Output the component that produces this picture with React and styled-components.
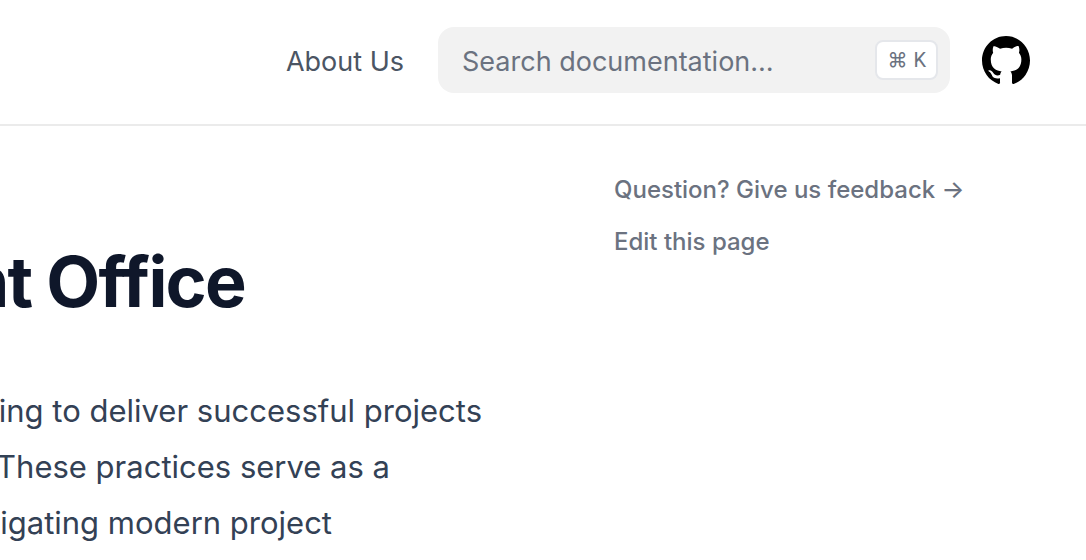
import React from 'react';
import styled, { createGlobalStyle } from 'styled-components';

const GlobalStyle = createGlobalStyle`
  *, *::before, *::after { box-sizing: border-box; }
  body {
    margin: 0;
    background: #fff;
    color: #334155;
    font-family: Inter, "Liberation Sans", sans-serif;
    overflow-x: hidden;
  }
`;

const Header = styled.header`
  display: flex;
  align-items: center;
  justify-content: flex-end;
  padding: 27px 56px 31px;
  border-bottom: 2px solid #ebebeb;
`;

const NavLink = styled.a`
  margin-right: 34px;
  padding-top: 4px;
  color: #4b5563;
  font-size: 27px;
  line-height: 40px;
  white-space: nowrap;
  text-decoration: none;
`;

const Search = styled.label`
  display: flex;
  align-items: center;
  width: 512px;
  margin-right: 32px;
  padding: 13px 12px 13px 24px;
  border-radius: 16px;
  background: #f2f2f2;
`;

const SearchInput = styled.input`
  flex: 1;
  min-width: 0;
  height: 40px;
  padding: 2px 0 0;
  border: 0;
  outline: 0;
  background: transparent;
  color: #111827;
  font: 27px/38px Inter, "Liberation Sans", sans-serif;
  &::placeholder { color: #6b7280; opacity: 1; }
`;

const Shortcut = styled.kbd`
  display: flex;
  align-items: center;
  gap: 6px;
  height: 40px;
  padding: 0 10px;
  border: 2px solid #e5e7eb;
  border-radius: 8px;
  background: #fff;
  color: #6b7280;
  font: 400 20px/36px Roboto, Inter, "DejaVu Sans", sans-serif;
`;

const GithubLink = styled.a`
  display: flex;
  color: #000;
`;

const Page = styled.div`
  display: grid;
  grid-template-columns: minmax(0, 1fr) 472px;
`;

const Article = styled.main`
  min-width: 0;
  overflow: hidden;
  padding-top: 115px;
`;

const Line = styled.span`
  display: flex;
  justify-content: flex-end;
  width: ${({ $end }) => $end}px;
  white-space: nowrap;
`;

const Title = styled.h1`
  margin: 0 0 60px;
  color: #0f172a;
  font-size: 70px;
  font-weight: 700;
  line-height: 82px;
  letter-spacing: -0.025em;
`;

const Paragraph = styled.p`
  margin: 0;
  font-size: 31px;
  line-height: 56px;
`;

const Aside = styled.aside`
  display: flex;
  flex-direction: column;
  align-items: flex-start;
  gap: 20px;
  padding-top: 48px;
`;

const AsideLink = styled.a`
  color: #6b7280;
  font-size: 24px;
  font-weight: 500;
  line-height: 32px;
  white-space: nowrap;
  text-decoration: none;
`;

export default function App() {
  return (
    <>
      <GlobalStyle />
      <Header>
        <NavLink href="#about">About Us</NavLink>
        <Search>
          <SearchInput type="search" aria-label="Search documentation" placeholder="Search documentation…" />
          <Shortcut><span>⌘</span><span>K</span></Shortcut>
        </Search>
        <GithubLink href="#github" aria-label="GitHub">
          <svg width="48" height="48" viewBox="3 3 18 18" fill="currentColor" aria-hidden="true">
            <path d="M12 3C7.0275 3 3 7.12937 3 12.2276C3 16.3109 5.57625 19.7597 9.15374 20.9824C9.60374 21.0631 9.77249 20.7863 9.77249 20.5441C9.77249 20.3249 9.76125 19.5982 9.76125 18.8254C7.5 19.2522 6.915 18.2602 6.735 17.7412C6.63375 17.4759 6.19499 16.6569 5.8125 16.4378C5.4975 16.2647 5.0475 15.838 5.80124 15.8264C6.51 15.8149 7.01625 16.4954 7.18499 16.7723C7.99499 18.1679 9.28875 17.7758 9.80625 17.5335C9.885 16.9337 10.1212 16.53 10.38 16.2993C8.3775 16.0687 6.285 15.2728 6.285 11.7432C6.285 10.7397 6.63375 9.9092 7.20749 9.26326C7.1175 9.03257 6.8025 8.08674 7.2975 6.81794C7.2975 6.81794 8.05125 6.57571 9.77249 7.76377C10.4925 7.55615 11.2575 7.45234 12.0225 7.45234C12.7875 7.45234 13.5525 7.55615 14.2725 7.76377C15.9937 6.56418 16.7475 6.81794 16.7475 6.81794C17.2424 8.08674 16.9275 9.03257 16.8375 9.26326C17.4113 9.9092 17.76 10.7281 17.76 11.7432C17.76 15.2843 15.6563 16.0687 13.6537 16.2993C13.98 16.5877 14.2613 17.1414 14.2613 18.0065C14.2613 19.2407 14.25 20.2326 14.25 20.5441C14.25 20.7863 14.4188 21.0746 14.8688 20.9824C16.6554 20.364 18.2079 19.1866 19.3078 17.6162C20.4077 16.0457 20.9995 14.1611 21 12.2276C21 7.12937 16.9725 3 12 3Z" />
          </svg>
        </GithubLink>
      </Header>
      <Page>
        <Article>
          <Title><Line $end={245}>Management Office</Line></Title>
          <Paragraph>
            <Line $end={482}>ing to deliver successful projects</Line>
            <Line $end={390}>These practices serve as a</Line>
            <Line $end={332}>vigating modern project</Line>
          </Paragraph>
        </Article>
        <Aside>
          <AsideLink href="#feedback">Question? Give us feedback →</AsideLink>
          <AsideLink href="#edit">Edit this page</AsideLink>
        </Aside>
      </Page>
    </>
  );
}
